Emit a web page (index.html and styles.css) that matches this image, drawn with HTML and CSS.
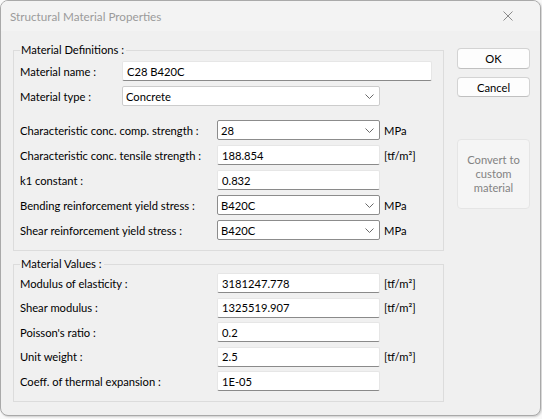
FILE: index.html
```html
<!DOCTYPE html>
<html>
<head>
<meta charset="utf-8">
<link rel="stylesheet" href="styles.css">
</head>
<body>
<div class="window">
  <div class="titlebar">
    <span class="title">Structural Material Properties</span>
    <svg class="close" width="10" height="10" viewBox="0 0 10 10"><path d="M0.5 0.5 L9.5 9.5 M9.5 0.5 L0.5 9.5" stroke="#8a8a8a" stroke-width="1" fill="none"/></svg>
  </div>
  <div class="content">
    <div class="groups">
      <div class="group g1">
        <span class="legend">Material Definitions :</span>
        <div class="row">
          <span class="label">Material name :</span>
          <div class="field name">C28 B420C</div>
        </div>
        <div class="row">
          <span class="label">Material type :</span>
          <div class="select type"><span>Concrete</span><svg class="chev" width="9" height="5" viewBox="0 0 9 5"><path d="M0.5 0.5 L4.5 4.5 L8.5 0.5" stroke="#6a6a6a" fill="none"/></svg></div>
        </div>
        <div class="row sep">
          <span class="label wide">Characteristic conc. comp. strength :</span>
          <div class="select dark"><span>28</span><svg class="chev" width="9" height="5" viewBox="0 0 9 5"><path d="M0.5 0.5 L4.5 4.5 L8.5 0.5" stroke="#6a6a6a" fill="none"/></svg></div>
          <span class="unit">MPa</span>
        </div>
        <div class="row">
          <span class="label wide">Characteristic conc. tensile strength :</span>
          <div class="field">188.854</div>
          <span class="unit">[tf/m²]</span>
        </div>
        <div class="row">
          <span class="label wide">k1 constant :</span>
          <div class="field">0.832</div>
        </div>
        <div class="row">
          <span class="label wide">Bending reinforcement yield stress :</span>
          <div class="select dark"><span>B420C</span><svg class="chev" width="9" height="5" viewBox="0 0 9 5"><path d="M0.5 0.5 L4.5 4.5 L8.5 0.5" stroke="#6a6a6a" fill="none"/></svg></div>
          <span class="unit">MPa</span>
        </div>
        <div class="row">
          <span class="label wide">Shear reinforcement yield stress :</span>
          <div class="select dark"><span>B420C</span><svg class="chev" width="9" height="5" viewBox="0 0 9 5"><path d="M0.5 0.5 L4.5 4.5 L8.5 0.5" stroke="#6a6a6a" fill="none"/></svg></div>
          <span class="unit">MPa</span>
        </div>
      </div>
      <div class="group g2">
        <span class="legend">Material Values :</span>
        <div class="row">
          <span class="label wide">Modulus of elasticity :</span>
          <div class="field">3181247.778</div>
          <span class="unit">[tf/m²]</span>
        </div>
        <div class="row">
          <span class="label wide">Shear modulus :</span>
          <div class="field">1325519.907</div>
          <span class="unit">[tf/m²]</span>
        </div>
        <div class="row">
          <span class="label wide">Poisson's ratio :</span>
          <div class="field">0.2</div>
        </div>
        <div class="row">
          <span class="label wide">Unit weight :</span>
          <div class="field">2.5</div>
          <span class="unit">[tf/m³]</span>
        </div>
        <div class="row">
          <span class="label wide">Coeff. of thermal expansion :</span>
          <div class="field">1E-05</div>
        </div>
      </div>
    </div>
    <div class="buttons">
      <div class="btn">OK</div>
      <div class="btn cancel">Cancel</div>
      <div class="btn convert">Convert to<br>custom<br>material</div>
    </div>
  </div>
</div>
</body>
</html>
```
FILE: styles.css
```css
* { box-sizing: border-box; }
html, body { margin: 0; padding: 0; }
body {
  background: #f9f9f9;
  font-family: Lato, "Segoe UI", "Liberation Sans", sans-serif;
  font-size: 11.2px;
  color: #000;
  width: 542px;
  height: 419px;
  overflow: hidden;
}
.window {
  width: 541px;
  height: 416px;
  border: 1px solid #a9a9a9;
  border-radius: 8px;
  background: #f0f0f0;
  overflow: hidden;
  display: flex;
  flex-direction: column;
  box-shadow: 1px 1px 2px rgba(0,0,0,0.18);
}
.titlebar {
  height: 30px;
  flex: none;
  background: #f3f3f3;
  display: flex;
  align-items: center;
  justify-content: space-between;
  padding: 0 27px 0 9px;
}
.title { color: #9b9b9b; font-size: 11.7px; }
.close { display: block; }
.content {
  display: flex;
  padding: 17px 0 0 12px;
}
.groups {
  width: 431px;
  margin-top: 2px;
  flex: none;
}
.group {
  position: relative;
  border: 1px solid #dcdcdc;
  padding: 10px 6px 10px 6px;
}
.g2 { margin-top: 13px; padding-top: 8px; }
.legend {
  position: absolute;
  top: -9px;
  left: 6px;
  padding: 0 2px 0 1px;
  background: #f0f0f0;
  line-height: 16px;
}
.row {
  display: flex;
  align-items: center;
  height: 20px;
}
.row + .row { margin-top: 5px; }
.g2 .row + .row { margin-top: 4.5px; }
.row.sep { margin-top: 14px; }
.label { width: 102px; flex: none; }
.label.wide { width: 197px; }
.field {
  width: 163px;
  height: 20px;
  background: #fff;
  border: 1px solid #e6e6e6;
  border-bottom-color: #8a8a8a;
  border-radius: 2px;
  padding-left: 4px;
  display: flex;
  align-items: center;
}
.field.name { width: 310px; }
.select {
  width: 163px;
  height: 20px;
  background: #fff;
  border: 1px solid #cccccc;
  border-radius: 2px;
  padding: 0 5px 0 3px;
  display: flex;
  align-items: center;
  justify-content: space-between;
}
.select.type { width: 258px; }
.select.dark { border-color: #8c8c8c; }
.chev { display: block; }
.unit { margin-left: 4px; }
.buttons {
  margin-left: 13px;
  display: flex;
  flex-direction: column;
}
.btn {
  width: 73px;
  height: 21px;
  background: #fdfdfd;
  border: 1px solid #d3d3d3;
  border-bottom-color: #c0c0c0;
  border-radius: 4px;
  display: flex;
  align-items: center;
  justify-content: center;
  text-align: center;
}
.btn.cancel { margin-top: 8px; height: 20px; }
.btn.convert {
  margin-top: 42px;
  height: 70px;
  background: #f5f5f5;
  border-color: #e5e5e5;
  color: #838383;
  line-height: 14px;
}
```
